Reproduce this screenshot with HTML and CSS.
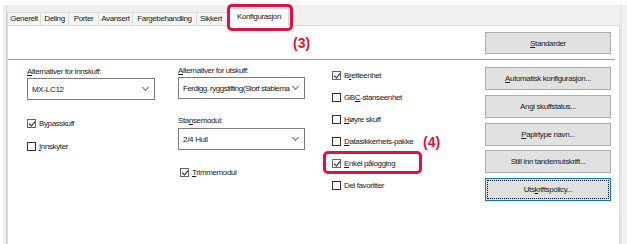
FILE: index.html
```html
<!DOCTYPE html>
<html>
<head>
<meta charset="utf-8">
<link rel="stylesheet" href="styles.css">
</head>
<body>
<div class="window">
  <div class="edge-left"></div>
  <div class="dialog">
    <div class="tabstrip">
      <div class="tab tab-gen">Generelt</div>
      <div class="tab tab-del">Deling</div>
      <div class="tab tab-por">Porter</div>
      <div class="tab tab-ava">Avansert</div>
      <div class="tab tab-far">Fargebehandling</div>
      <div class="tab tab-sik">Sikkert</div>
      <div class="tab tab-active">Konfigurasjon</div>
    </div>
    <div class="panel">
      <div class="toprow"><div class="btn btn-top"><u>S</u>tandarder</div></div>
      <div class="sep"></div>
      <div class="grid">
        <div class="col col1">
          <div class="label"><u>A</u>lternativer for innskuff:</div>
          <div class="combo"><span class="combo-text">MX-LC12</span><span class="chev"></span></div>
          <div class="check check-bypass"><span class="box checked"></span><span>B<u>y</u>passkuff</span></div>
          <div class="check check-innsk"><span class="box"></span><span><u>I</u>nnskyter</span></div>
        </div>
        <div class="col col2">
          <div class="label"><u>A</u>lternativer for utskuff:</div>
          <div class="combo"><span class="combo-text combo-long">Ferdigg. ryggstifting(Stort stablema</span><span class="chev"></span></div>
          <div class="label label-stanse">Sta<u>n</u>semodul:</div>
          <div class="combo combo-stanse"><span class="combo-text">2/4 Hull</span><span class="chev"></span></div>
          <div class="check check-trim"><span class="box checked"></span><span><u>T</u>rimmemodul</span></div>
        </div>
        <div class="col col3">
          <div class="check"><span class="box checked"></span><span>B<u>r</u>etteenhet</span></div>
          <div class="check"><span class="box"></span><span>GB<u>C</u>-stanseenhet</span></div>
          <div class="check"><span class="box"></span><span><u>H</u>øyre skuff</span></div>
          <div class="check"><span class="box"></span><span><u>D</u>atasikkerhets-pakke</span></div>
          <div class="check"><span class="box checked"></span><span><u>E</u>nkel pålogging</span></div>
          <div class="check"><span class="box"></span><span>Del favoritter</span></div>
        </div>
        <div class="col col4">
          <div class="btn"><u>A</u>utomatisk konfigurasjon...</div>
          <div class="btn">Angi skuffstatus...</div>
          <div class="btn"><u>P</u>apirtype navn...</div>
          <div class="btn">Still inn tandemutskrift...</div>
          <div class="btn btn-focus">Uts<u>k</u>riftspolicy...</div>
        </div>
      </div>
    </div>
  </div>
  <div class="edge-right"></div>
  <div class="callout callout-3"></div>
  <div class="num num-3">(3)</div>
  <div class="callout callout-4"></div>
  <div class="num num-4">(4)</div>
</div>
</body>
</html>
```

FILE: styles.css
```css
* { box-sizing: border-box; }
html, body { margin: 0; padding: 0; background: #fff; }
body { width: 627px; height: 244px; overflow: hidden; font-family: "Liberation Sans", Arial, sans-serif; font-size: 8px; letter-spacing: -0.38px; color: #1a1a1a; }
u { text-decoration: underline; text-underline-offset: 1px; }

.window { position: relative; display: flex; height: 244px; padding-top: 5px; }
.edge-left { width: 7px; flex: none; background: #f0f0f0; border-left: 3px solid #fff; border-right: 1px solid #d4d4d4; }
.edge-right { width: 7px; flex: none; background: #f0f0f0; border-left: 2px solid #e6e6e6; }
.dialog { flex: 1; display: flex; flex-direction: column; background: #f0f0f0; }

.tabstrip { height: 20px; display: flex; align-items: flex-end; }
.tab { flex: none; height: 13px; line-height: 12px; text-align: center; border: 1px solid #d9d9d9; border-bottom: none; border-right: none; background: #f5f5f5; white-space: nowrap; overflow: hidden; }
.tab-gen { width: 33px; }
.tab-del { width: 28px; }
.tab-por { width: 30px; }
.tab-ava { width: 34px; }
.tab-far { width: 64px; }
.tab-sik { width: 35px; text-align: left; padding-left: 3px; }
.tab-active { position: relative; z-index: 2; height: 18px; line-height: 15px; width: 60px; margin-left: -2px; margin-bottom: -1px; background: #fff; border-right: 1px solid #d9d9d9; overflow: visible; }

.panel { flex: 1; background: #fff; border: 1px solid #d9d9d9; border-bottom: none; display: flex; flex-direction: column; }
.toprow { display: flex; justify-content: flex-end; padding: 6px 8px 0 0; }
.btn { height: 23px; display: flex; align-items: center; justify-content: center; background: #e1e1e1; border: 1px solid #adadad; white-space: nowrap; }
.btn-top { width: 126px; height: 22px; }
.sep { height: 1px; background: #a0a0a0; margin: 5px 4px 0 0; }

.grid { display: grid; grid-template-columns: 151px 154px 153px 126px; padding-left: 19px; }
.col { display: flex; flex-direction: column; }
.col1 { padding-top: 7px; }
.col2 { padding-top: 6px; }
.col3 { padding-top: 10px; gap: 12px; }
.col4 { padding-top: 7px; gap: 4.75px; }

.label { height: 10px; line-height: 10px; white-space: nowrap; }
.combo { margin-top: 1px; width: 128px; height: 22px; border: 1px solid #7a7a7a; background: #fff; display: flex; align-items: center; padding: 0 6px 0 4px; gap: 3px; }
.col2 .combo { width: 127px; }
.combo-text { flex: 1; overflow: hidden; white-space: nowrap; font-size: 8px; letter-spacing: -0.3px; }
.combo-long { letter-spacing: -0.5px; }
.chev { width: 5px; height: 5px; border-right: 1px solid #707070; border-bottom: 1px solid #707070; transform: rotate(45deg); margin-top: -3px; flex: none; }
.label-stanse { margin-top: 17px; }
.col2 .combo-stanse { margin-top: 2px; }

.check { height: 10px; display: flex; align-items: center; gap: 3px; white-space: nowrap; }
.box { width: 9px; height: 9px; border: 1px solid #333; background: #fff; flex: none; position: relative; }
.box.checked { border-color: #666; }
.box.checked::after { content: ""; position: absolute; left: 2px; top: 0px; width: 3px; height: 5px; border-right: 1px solid #222; border-bottom: 1px solid #222; transform: rotate(40deg); }
.check-bypass { margin-top: 18px; }
.check-innsk { margin-top: 13px; }
.check-trim { margin-top: 17px; margin-left: 2px; }

.btn-focus { border-color: #0078d7; outline: 1px dotted #000; outline-offset: -3px; }

.callout { position: absolute; border: 3px solid #e3103c; border-radius: 5px; z-index: 5; }
.callout-3 { left: 227px; top: 4px; width: 66px; height: 27px; }
.callout-4 { left: 323px; top: 151px; width: 99px; height: 23px; }
.num { position: absolute; color: #e3103c; font-weight: bold; font-size: 14px; letter-spacing: 0; z-index: 5; }
.num-3 { left: 293px; top: 35px; }
.num-4 { left: 423px; top: 134px; }
```
